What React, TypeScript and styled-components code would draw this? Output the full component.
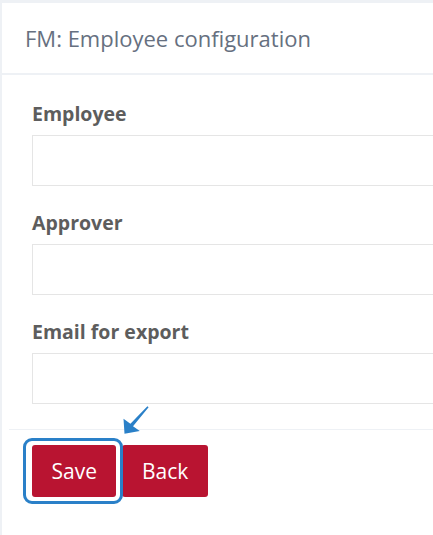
import React from "react";
import styled, { createGlobalStyle } from "styled-components";

const Global = createGlobalStyle`
  html, body { margin: 0; padding: 0; background: #eef1f5; }
  body { font-family: "Open Sans", "Liberation Sans", sans-serif; }
  #root { width: 433px; height: 535px; overflow: hidden; }
`;

const Page = styled.div`
  padding: 3px 0 0 2px;
  height: 535px;
  box-sizing: border-box;
`;

const Card = styled.div`
  background: #fff;
  width: 480px;
  height: 100%;
  display: flex;
  flex-direction: column;
`;

const Header = styled.div`
  height: 72px;
  box-sizing: border-box;
  border-bottom: 2px solid #eef1f5;
  padding-left: 23px;
  display: flex;
  align-items: center;
`;

const Title = styled.h1`
  margin: 0;
  font-size: 22px;
  font-weight: 500;
  color: #667080;
`;

const Body = styled.div`
  padding: 25px 0 25px 30px;
  display: flex;
  flex-direction: column;
  gap: 23px;
`;

const Field = styled.div`
  display: flex;
  flex-direction: column;
  gap: 8px;
`;

const Label = styled.label`
  font-size: 19.5px;
  font-weight: 700;
  color: #5d5d5d;
  line-height: 27px;
`;

const Input = styled.input`
  box-sizing: border-box;
  height: 51px;
  width: 100%;
  border: 1.5px solid #e5e5e5;
  background: #fff;
  outline: none;
`;

const Footer = styled.div`
  margin-left: 7px;
  border-top: 1.5px solid #eef1f5;
  padding: 15px 0 0 23px;
  display: flex;
  gap: 6px;
  position: relative;
`;

const Button = styled.button`
  height: 52px;
  padding: 0 19.5px;
  border: none;
  border-radius: 3px;
  background: #b91431;
  color: #fff;
  font-family: "Open Sans", "Liberation Sans", sans-serif;
  font-size: 21px;
  cursor: pointer;
`;

const Highlight = styled.div`
  position: absolute;
  left: 14px;
  top: 7.5px;
  width: 100px;
  height: 66px;
  box-sizing: border-box;
  border: 3.5px solid #2a80c8;
  border-radius: 9px;
  pointer-events: none;
`;

const Arrow = styled.svg`
  position: absolute;
  left: 109px;
  top: -30.5px;
  width: 34px;
  height: 36px;
  overflow: visible;
`;

export default function App() {
  return (
    <>
      <Global />
      <Page>
        <Card>
          <Header>
            <Title>FM: Employee configuration</Title>
          </Header>
          <Body>
            <Field>
              <Label>Employee</Label>
              <Input />
            </Field>
            <Field>
              <Label>Approver</Label>
              <Input />
            </Field>
            <Field>
              <Label>Email for export</Label>
              <Input />
            </Field>
          </Body>
          <Footer>
            <Button>Save</Button>
            <Button>Back</Button>
            <Highlight />
            <Arrow viewBox="0 0 34 36">
              <path
                d="M29.4 6.2 L30.6 7.2 L15 26.2 L21.8 31 L6.5 33.8 L5.5 18.8 L12.4 23.8 Z"
                fill="#2a80c8"
              />
            </Arrow>
          </Footer>
        </Card>
      </Page>
    </>
  );
}
